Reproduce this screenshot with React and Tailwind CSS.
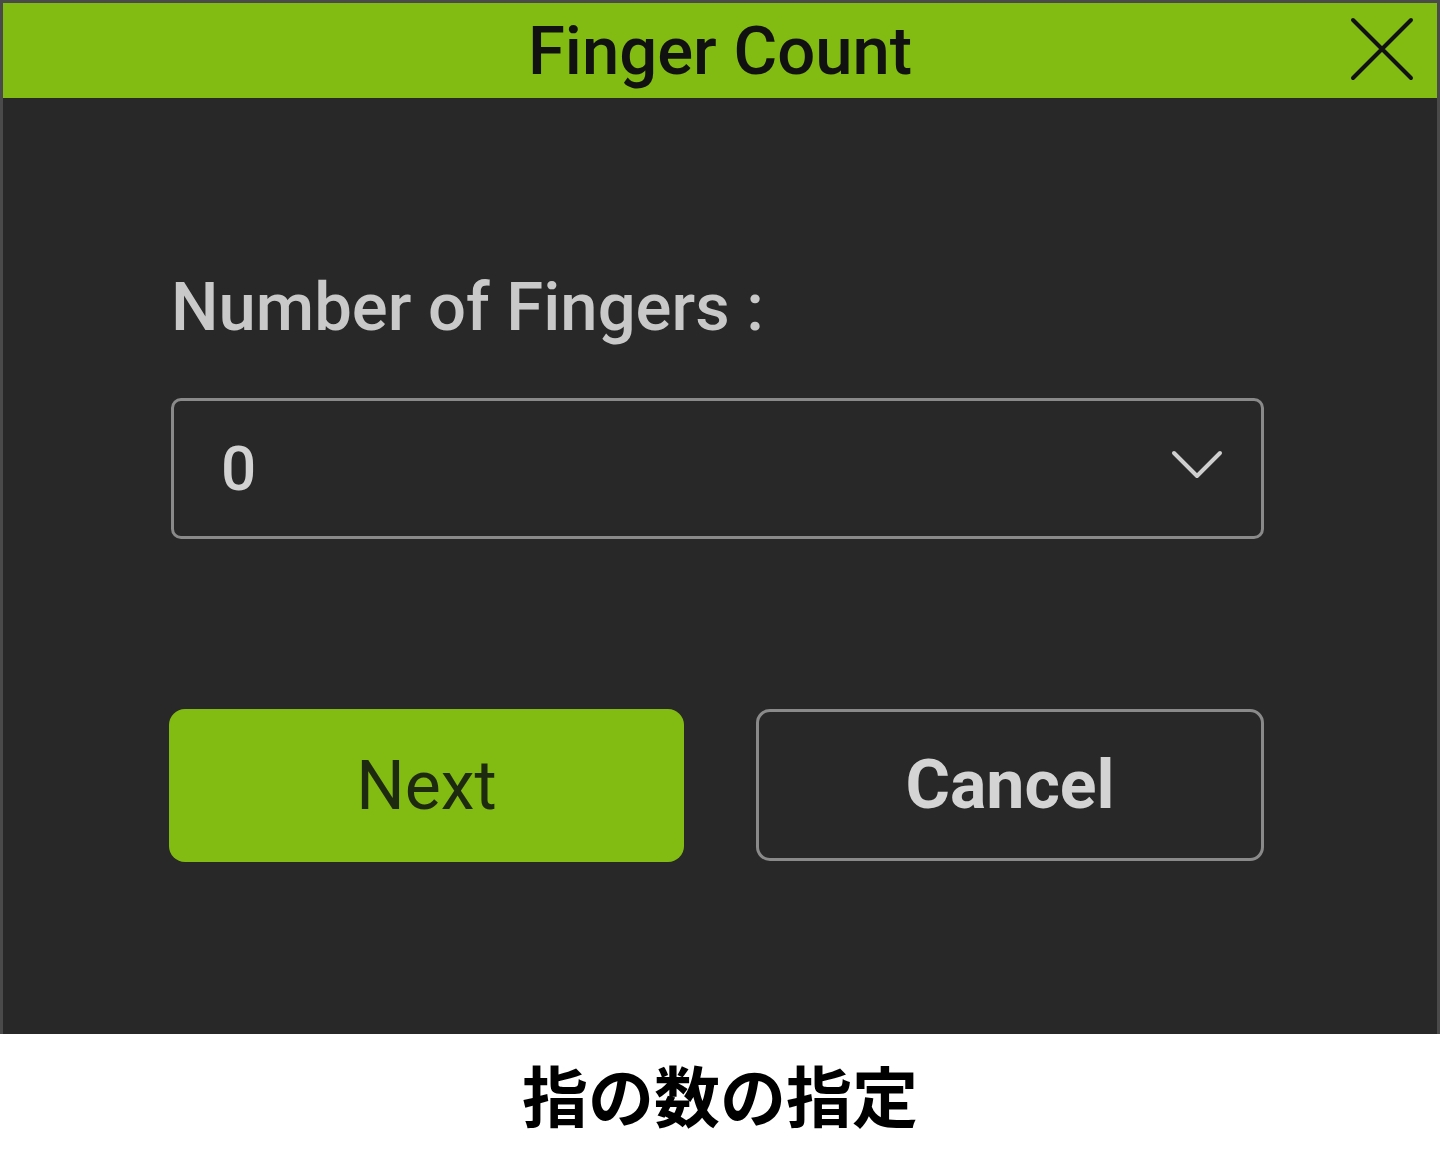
export default function App() {
  return (
    <div className="w-[1440px] h-[1152px] bg-white flex flex-col" style={{ fontFamily: 'Roboto, "Noto Sans CJK JP", sans-serif' }}>
      {/* Dialog */}
      <div className="h-[1034px] border-[3px] border-b-0 border-[#4a4a4a] bg-[#282828] flex flex-col">
        <div className="relative h-[95px] bg-[#82bc12] flex items-center justify-center">
          <span className="text-[67px] font-medium text-[#111] leading-none mt-[2px]">Finger Count</span>
          <svg className="absolute right-[23px] top-[14px]" width="64" height="64" viewBox="0 0 64 64" fill="none" stroke="#111" strokeWidth="4" strokeLinecap="round">
            <path d="M3 3 L61 61 M61 3 L3 61" />
          </svg>
        </div>

        <div className="flex-1 pl-[168px] pr-[173px] pt-[176px]">
          <div className="text-[67px] font-medium text-[#c9c9c9] leading-none">Number of Fingers :</div>

          <div className="mt-[57px] h-[141px] border-[3px] border-[#8a8a8a] rounded-[10px] flex items-center justify-between pl-[47px] pr-[38px]">
            <span className="text-[62px] font-medium text-[#d2d2d2] leading-none">0</span>
            <svg className="mb-[10px]" width="52" height="30" viewBox="0 0 52 30" fill="none" stroke="#cfcfcf" strokeWidth="4" strokeLinecap="round" strokeLinejoin="round">
              <path d="M3 4 L26 27 L49 4" />
            </svg>
          </div>

          <div className="mt-[170px] flex gap-[72px] -ml-[2px]">
            <button className="w-[515px] h-[153px] bg-[#82bc12] rounded-[16px] text-[68px] text-[#1e2a10] leading-none">Next</button>
            <button className="flex-1 h-[152px] border-[3px] border-[#8a8a8a] rounded-[14px] text-[68px] font-bold text-[#d4d4d4] leading-none">Cancel</button>
          </div>
        </div>
      </div>

      {/* Caption */}
      <div className="flex-1 flex items-center justify-center">
        <span className="text-[66px] font-bold text-black leading-none" style={{ fontFamily: '"Noto Sans CJK JP", sans-serif' }}>指の数の指定</span>
      </div>
    </div>
  )
}
